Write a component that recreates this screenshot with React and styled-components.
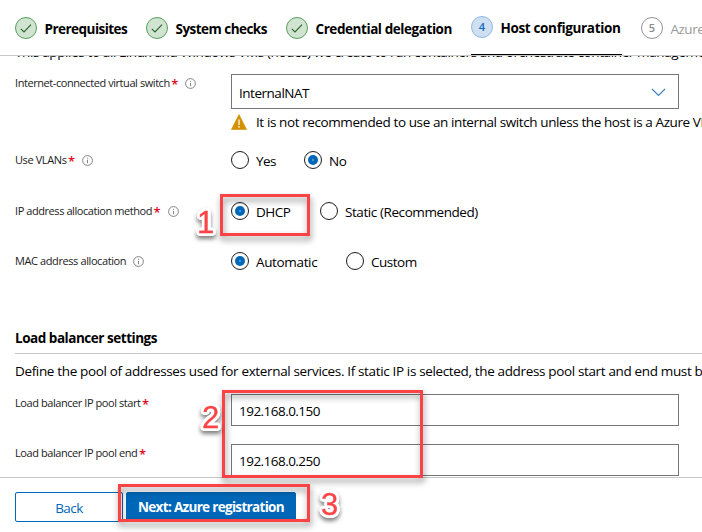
import React from "react";
import styled, { createGlobalStyle } from "styled-components";

const GlobalStyle = createGlobalStyle`
  * { box-sizing: border-box; }
  body { margin: 0; background: #fff; overflow: hidden; }
`;

const Page = styled.div`
  position: relative;
  display: flex;
  flex-direction: column;
  width: 702px;
  height: 532px;
  overflow: hidden;
  background: #fff;
  color: #000;
  font: 400 13.5px/20px "Open Sans", "Noto Sans", sans-serif;
`;

const Text = styled.span`
  white-space: nowrap;
  letter-spacing: ${(p) => p.$track ?? -0.4}px;
`;

/* Wizard steps */
const Steps = styled.nav`
  display: flex;
  flex: none;
  height: 56px;
  padding-left: 15px;
  border-bottom: 1px solid #c8c8c8;
`;

const Step = styled.div`
  display: flex;
  flex: none;
  align-items: flex-start;
  width: ${(p) => p.$width}px;
  height: 55px;
  margin-right: ${(p) => p.$gap ?? 0}px;
  padding-top: ${(p) => (p.$active ? 16 : 17)}px;
  border-bottom: ${(p) => (p.$active ? "1px solid #000" : "none")};
  color: ${(p) => (p.$muted ? "#9a9a9a" : "#000")};
  font-weight: ${(p) => (p.$muted ? 400 : 700)};
`;

const StepBadge = styled.span`
  display: flex;
  flex: none;
  align-items: center;
  justify-content: center;
  width: 22px;
  height: 22px;
  margin-right: 7.5px;
  border: 1px solid ${(p) => p.$border};
  border-radius: 50%;
  background: ${(p) => p.$fill};
  color: ${(p) => p.$color};
  font-size: 11px;
  font-weight: 600;
  line-height: 18px;
  padding-bottom: 1px;
`;

const StepName = styled(Text)`
  padding-top: 2px;
`;

/* Form */
const Content = styled.main`
  display: flex;
  flex-direction: column;
  height: 421px;
  overflow: hidden;
  padding-left: 15px;
`;

const Paragraph = styled.p`
  flex: none;
  height: 20px;
  margin: ${(p) => p.$margin};
  white-space: nowrap;
  letter-spacing: ${(p) => p.$track}px;
`;

const Field = styled.div`
  display: grid;
  flex: none;
  grid-template-columns: 216px 448px;
  height: ${(p) => p.$height}px;
`;

const Label = styled.div`
  display: flex;
  align-items: center;
  height: 18px;
  color: #1b1b1b;
  font-size: 11px;
`;

const Required = styled.span`
  margin-left: 1.5px;
  padding-top: 2px;
  color: #e00b1c;
  font-size: 13px;
  font-weight: 600;
  line-height: 18px;
`;

const InfoSvg = styled.svg`
  flex: none;
  margin: 1px 0 0 ${(p) => p.$gap}px;
`;

const Control = styled.div`
  display: flex;
  flex-direction: column;
`;

const InputBox = styled.div`
  display: flex;
  flex: none;
  align-items: center;
  justify-content: space-between;
  height: ${(p) => p.$height}px;
  padding: 2px 12px 0 7px;
  border: 1px solid #767676;
`;

const Warning = styled.div`
  display: flex;
  align-items: center;
  gap: 9px;
  height: 26px;
`;

const WarningSvg = styled.svg`
  flex: none;
`;

const Radios = styled.div`
  display: flex;
  height: 18px;
`;

const Radio = styled.div`
  display: flex;
  flex: none;
  align-items: center;
  gap: 7px;
  width: ${(p) => p.$width}px;
`;

const Dial = styled.span`
  display: flex;
  flex: none;
  align-items: center;
  justify-content: center;
  width: 18px;
  height: 18px;
  border: 1px solid #1b1b1b;
  border-radius: 50%;
`;

const Dot = styled.span`
  width: 10px;
  height: 10px;
  border-radius: 50%;
  background: radial-gradient(circle, #b4d4ee 0.3px, #0067b8 1px);
`;

const RadioText = styled(Text)`
  padding-top: 2px;
`;

const Heading = styled.h2`
  flex: none;
  height: 26px;
  margin: 0;
  border-bottom: 1px solid #c8c8c8;
  font-size: 13.5px;
  font-weight: 700;
  line-height: 20px;
  letter-spacing: -0.47px;
`;

const Footer = styled.footer`
  display: flex;
  gap: 3px;
  height: 55px;
  padding: 14px 0 0 15px;
  border-top: 1px solid #c8c8c8;
`;

const Button = styled.button`
  width: ${(p) => p.$width}px;
  height: 30px;
  padding: ${(p) => (p.$primary ? 0 : "1px 0 0")};
  border: 1px solid #0067b8;
  border-radius: 2px;
  background: ${(p) => (p.$primary ? "#0067b8" : "#fff")};
  color: ${(p) => (p.$primary ? "#fff" : "#0067b8")};
  font: ${(p) => (p.$primary ? 700 : 500)} 13.5px/26px "Open Sans", sans-serif;
`;

/* Callouts drawn over the form */
const Callout = styled.div`
  position: absolute;
  left: ${(p) => p.$x}px;
  top: ${(p) => p.$y}px;
  width: ${(p) => p.$w}px;
  height: ${(p) => p.$h}px;
  border: 3px solid #fb4346;
  filter: drop-shadow(1px 4px 3px rgba(0, 0, 0, 0.45));
`;

const outline = Array.from({ length: 20 }, (_, i) => {
  const a = (i / 20) * Math.PI * 2;
  return `${(Math.cos(a) * 3).toFixed(2)}px ${(Math.sin(a) * 3).toFixed(2)}px 0 #fff`;
}).join(", ");

const CalloutNumber = styled.span`
  position: absolute;
  left: ${(p) => p.$x}px;
  top: ${(p) => p.$y}px;
  color: #fb4346;
  font: 400 31px/31px "Liberation Sans", sans-serif;
  -webkit-text-stroke: 0.3px #fb4346;
  text-shadow: ${outline};
  filter: drop-shadow(0 3px 2px rgba(0, 0, 0, 0.5));
`;

function Info({ gap = 8 }) {
  return (
    <InfoSvg $gap={gap} width="11" height="11" viewBox="0 0 11 11" fill="none" stroke="#777" strokeWidth="0.9">
      <circle cx="5.5" cy="5.5" r="4.9" />
      <path d="M5.5 4.8V8.2M5.5 2.8V3.8" />
    </InfoSvg>
  );
}

function Check() {
  return (
    <StepBadge $border="#57a05b" $fill="#d0e4d1">
      <svg width="20" height="20" viewBox="0 0 20 20" fill="none" stroke="#28632b" strokeWidth="1.1">
        <path d="M4.8 10.8L8 14L15 6.7" />
      </svg>
    </StepBadge>
  );
}

function Option({ width, checked, track, children }) {
  return (
    <Radio $width={width}>
      <Dial>{checked && <Dot />}</Dial>
      <RadioText $track={track}>{children}</RadioText>
    </Radio>
  );
}

export default function App() {
  return (
    <Page>
      <GlobalStyle />
      <Steps>
        <Step $width={131}><Check /><StepName $track={-0.53}>Prerequisites</StepName></Step>
        <Step $width={140}><Check /><StepName $track={-0.53}>System checks</StepName></Step>
        <Step $width={185}><Check /><StepName $track={-0.43}>Credential delegation</StepName></Step>
        <Step $width={151} $gap={19} $active>
          <StepBadge $border="#8db9e4" $fill="#cfe0f2" $color="#0f6cbd">4</StepBadge>
          <StepName $track={-0.35}>Host configuration</StepName>
        </Step>
        <Step $width={80} $muted>
          <StepBadge $border="#949494" $fill="#fff" $color="#8a8a8a">5</StepBadge>
          <StepName $track={-0.5}>Azure registration</StepName>
        </Step>
      </Steps>

      <Content>
        <Paragraph $margin="-14px 0 12px" $track={-0.38}>
          This applies to all Linux and Windows VMs (nodes) we create to run containers and orchestrate container management
        </Paragraph>
        <Field $height={77}>
          <Label><Text $track={-0.43}>Internet-connected virtual switch</Text><Required>*</Required><Info gap={6.5} /></Label>
          <Control>
            <InputBox $height={35}>
              <Text $track={-0.48}>InternalNAT</Text>
              <svg width="15" height="9" viewBox="0 0 15 9" fill="none" stroke="#3b7fbf" strokeWidth="1.1">
                <path d="M1 1L7.5 7.5L14 1" />
              </svg>
            </InputBox>
            <Warning>
              <WarningSvg width="16" height="16" viewBox="0 0 16 16">
                <path d="M8 .5L15.6 15.5H.4Z" fill="#d29200" stroke="#d29200" strokeWidth=".6" strokeLinejoin="round" />
                <path d="M8 5.5V11M8 12V13.8" stroke="#f3ead2" strokeWidth="1.5" />
              </WarningSvg>
              <Text>It is not recommended to use an internal switch unless the host is a Azure VM</Text>
            </Warning>
          </Control>
        </Field>
        <Field $height={51}>
          <Label><Text $track={-0.4}>Use VLANs</Text><Required>*</Required><Info gap={6.5} /></Label>
          <Radios>
            <Option width={73} track={-0.6}>Yes</Option>
            <Option width={80} checked track={-0.4}>No</Option>
          </Radios>
        </Field>
        <Field $height={50}>
          <Label><Text $track={-0.43}>IP address allocation method</Text><Required>*</Required><Info gap={7} /></Label>
          <Radios>
            <Option width={89} checked track={-0.5}>DHCP</Option>
            <Option width={180} track={-0.42}>Static (Recommended)</Option>
          </Radios>
        </Field>
        <Field $height={76}>
          <Label><Text $track={-0.4}>MAC address allocation</Text><Info gap={7} /></Label>
          <Radios>
            <Option width={115} checked track={-0.35}>Automatic</Option>
            <Option width={80} track={-0.5}>Custom</Option>
          </Radios>
        </Field>
        <Heading>Load balancer settings</Heading>
        <Paragraph $margin="7px 0 13px" $track={-0.35}>
          Define the pool of addresses used for external services. If static IP is selected, the address pool start and end must be
        </Paragraph>
        <Field $height={50}>
          <Label><Text $track={-0.43}>Load balancer IP pool start</Text><Required>*</Required></Label>
          <Control><InputBox $height={32}><Text $track={-0.53}>192.168.0.150</Text></InputBox></Control>
        </Field>
        <Field $height={32}>
          <Label><Text $track={-0.43}>Load balancer IP pool end</Text><Required>*</Required></Label>
          <Control><InputBox $height={32}><Text $track={-0.53}>192.168.0.250</Text></InputBox></Control>
        </Field>
      </Content>

      <Footer>
        <Button $width={108}><Text $track={-0.55}>Back</Text></Button>
        <Button $primary $width={170}><Text $track={-0.68}>Next: Azure registration</Text></Button>
      </Footer>

      <Callout $x={220} $y={194} $w={90} $h={42} />
      <Callout $x={222} $y={390} $w={201} $h={88} />
      <Callout $x={118} $y={484} $w={192} $h={38} />
      <CalloutNumber $x={197} $y={207}>1</CalloutNumber>
      <CalloutNumber $x={202} $y={402}>2</CalloutNumber>
      <CalloutNumber $x={321} $y={489}>3</CalloutNumber>
    </Page>
  );
}
